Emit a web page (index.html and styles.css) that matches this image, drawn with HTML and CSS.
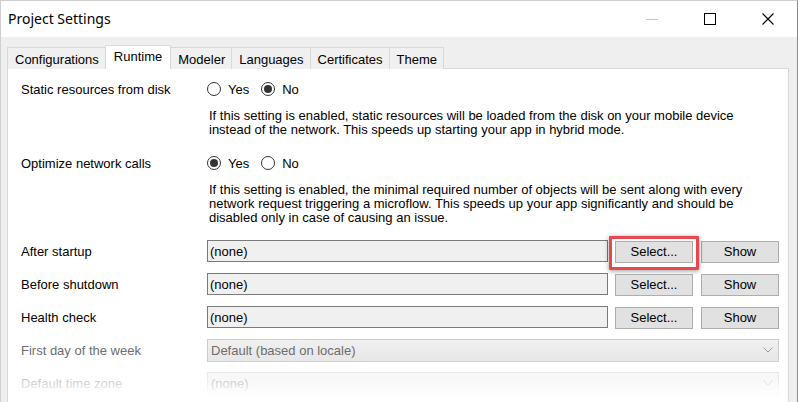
FILE: index.html
```html
<!DOCTYPE html>
<html>
<head>
<meta charset="utf-8">
<title>Project Settings</title>
<link rel="stylesheet" href="styles.css">
</head>
<body>
<div class="window">
  <div class="titlebar">
    <span class="title">Project Settings</span>
    <div class="caption">
      <span class="cap"><svg width="14" height="14" viewBox="0 0 14 14"><line x1="1" y1="7.5" x2="13" y2="7.5" stroke="#c4c4c4" stroke-width="1"/></svg></span>
      <span class="cap"><svg width="14" height="14" viewBox="0 0 14 14"><rect x="1.5" y="1.5" width="11" height="11" fill="none" stroke="#000" stroke-width="1"/></svg></span>
      <span class="cap"><svg width="14" height="14" viewBox="0 0 14 14"><path d="M1.5 1.5 L12.5 12.5 M12.5 1.5 L1.5 12.5" stroke="#000" stroke-width="1.1" fill="none"/></svg></span>
    </div>
  </div>
  <div class="client">
    <div class="tabs">
      <div class="tab">Configurations</div>
      <div class="tab active">Runtime</div>
      <div class="tab">Modeler</div>
      <div class="tab">Languages</div>
      <div class="tab">Certificates</div>
      <div class="tab">Theme</div>
    </div>
    <div class="panel">
      <div class="setting">
        <div class="row">
          <div class="label">Static resources from disk</div>
          <div class="radios">
            <label class="option"><span class="radio"></span>Yes</label>
            <label class="option"><span class="radio checked"></span>No</label>
          </div>
        </div>
        <p class="desc">If this setting is enabled, static resources will be loaded from the disk on your mobile device<br>instead of the network. This speeds up starting your app in hybrid mode.</p>
      </div>
      <div class="setting">
        <div class="row">
          <div class="label">Optimize network calls</div>
          <div class="radios">
            <label class="option"><span class="radio checked"></span>Yes</label>
            <label class="option"><span class="radio"></span>No</label>
          </div>
        </div>
        <p class="desc">If this setting is enabled, the minimal required number of objects will be sent along with every<br>network request triggering a microflow. This speeds up your app significantly and should be<br>disabled only in case of causing an issue.</p>
      </div>
      <div class="row field-row">
        <div class="label">After startup</div>
        <div class="field">(none)</div>
        <div class="btn-wrap highlighted"><button class="btn">Select...</button></div>
        <button class="btn show">Show</button>
      </div>
      <div class="row field-row">
        <div class="label">Before shutdown</div>
        <div class="field">(none)</div>
        <div class="btn-wrap"><button class="btn">Select...</button></div>
        <button class="btn show">Show</button>
      </div>
      <div class="row field-row">
        <div class="label">Health check</div>
        <div class="field">(none)</div>
        <div class="btn-wrap"><button class="btn">Select...</button></div>
        <button class="btn show">Show</button>
      </div>
      <div class="row field-row disabled">
        <div class="label">First day of the week</div>
        <div class="dropdown"><span>Default (based on locale)</span><svg width="10" height="6" viewBox="0 0 10 6"><path d="M0.5 0.5 L5 5 L9.5 0.5" fill="none" stroke="#9a9a9a" stroke-width="1"/></svg></div>
      </div>
      <div class="row field-row disabled">
        <div class="label">Default time zone</div>
        <div class="dropdown"><span>(none)</span><svg width="10" height="6" viewBox="0 0 10 6"><path d="M0.5 0.5 L5 5 L9.5 0.5" fill="none" stroke="#9a9a9a" stroke-width="1"/></svg></div>
      </div>
      <div class="fade"></div>
    </div>
  </div>
</div>
</body>
</html>
```
FILE: styles.css
```css
* { box-sizing: border-box; }
html, body { margin: 0; padding: 0; }
body {
  width: 798px;
  height: 402px;
  overflow: hidden;
  background: #fff;
  font-family: "Liberation Sans", Arial, sans-serif;
  font-size: 13px;
  color: #000;
}
.window {
  width: 798px;
  height: 402px;
  border-top: 1px solid #cfcfcf;
  border-left: 1px solid #cfcfcf;
  border-right: 1px solid #8a8a8a;
  display: flex;
  flex-direction: column;
  overflow: hidden;
}
.titlebar {
  height: 36px;
  flex: none;
  background: #fff;
  display: flex;
  align-items: center;
  justify-content: space-between;
}
.title {
  padding-left: 7px;
  font-family: "Noto Sans", "Open Sans", sans-serif;
  font-size: 14px;
  color: #000;
  padding-bottom: 1px;
}
.caption { display: flex; height: 100%; }
.cap {
  width: 58px;
  height: 100%;
  display: flex;
  align-items: center;
  justify-content: center;
  padding-bottom: 1px;
}
.client {
  flex: 1;
  background: #efefef;
  padding: 8px 8px 0 6px;
  display: flex;
  flex-direction: column;
  min-height: 0;
}
.tabs {
  display: flex;
  align-items: flex-end;
  height: 24px;
  flex: none;
  position: relative;
  z-index: 2;
  margin-bottom: -1px;
}
.tab {
  height: 22px;
  padding: 0 6px 0 7px;
  border: 1px solid #d9d9d9;
  border-bottom: none;
  margin-left: -1px;
  background: #f0f0f0;
  display: flex;
  align-items: center;
  padding-top: 1px;
  white-space: nowrap;
}
.tab:first-child { margin-left: 0; }
.tab.active {
  height: 24px;
  background: #fff;
  padding: 0 8px 2px;
  position: relative;
  z-index: 1;
}
.panel {
  flex: 1;
  position: relative;
  background: #fff;
  border: 1px solid #d9d9d9;
  border-bottom: none;
  padding: 9px 9px 0 13px;
  overflow: hidden;
}
.setting { margin-bottom: 15px; }
.row {
  display: flex;
  align-items: center;
  height: 22px;
}
.label {
  width: 186px;
  flex: none;
  white-space: nowrap;
}
.radios { display: flex; align-items: center; }
.option {
  display: flex;
  align-items: center;
  margin-right: 12px;
}
.radio {
  width: 14px;
  height: 14px;
  border: 1px solid #333;
  border-radius: 50%;
  background: #fff;
  margin-right: 7px;
  position: relative;
}
.radio.checked::after {
  content: "";
  position: absolute;
  left: 2px;
  top: 2px;
  width: 8px;
  height: 8px;
  border-radius: 50%;
  background: #333;
}
.desc {
  margin: 9px 0 0 188px;
  line-height: 14px;
  white-space: nowrap;
}
.field-row { margin-bottom: 11px; }
.field {
  flex: 1;
  height: 22px;
  border: 1px solid #7a7a7a;
  background: #f0f0f0;
  padding-left: 2px;
  display: flex;
  align-items: center;
}
.btn-wrap {
  position: relative;
  margin-left: 7px;
  flex: none;
}
.btn {
  width: 78px;
  height: 22px;
  border: 1px solid #adadad;
  background: #e1e1e1;
  font-family: "Liberation Sans", Arial, sans-serif;
  font-size: 13px;
  color: #000;
  padding: 0;
  display: block;
  margin-top: 1px;
}
.show { margin-left: 8px; flex: none; }
.highlighted::after {
  content: "";
  position: absolute;
  left: -6px;
  right: -6px;
  top: -4px;
  bottom: -7px;
  border: 3px solid #e8474b;
  border-radius: 1px;
  box-shadow: 0 1px 5px rgba(0,0,0,0.4);
}
.disabled .label { color: #6d6d6d; }
.dropdown {
  flex: 1;
  height: 23px;
  border: 1px solid #cccccc;
  background: linear-gradient(#f0f0f0, #e7e7e7);
  color: #6d6d6d;
  display: flex;
  align-items: center;
  justify-content: space-between;
  padding: 0 5px 0 3px;
}
.fade {
  position: absolute;
  left: 0;
  right: 0;
  bottom: 0;
  height: 42px;
  background: linear-gradient(rgba(255,255,255,0) 0%, rgba(255,255,255,0.45) 22%, rgba(255,255,255,0.65) 50%, rgba(255,255,255,0.9) 75%, #fff 88%);
}
```
